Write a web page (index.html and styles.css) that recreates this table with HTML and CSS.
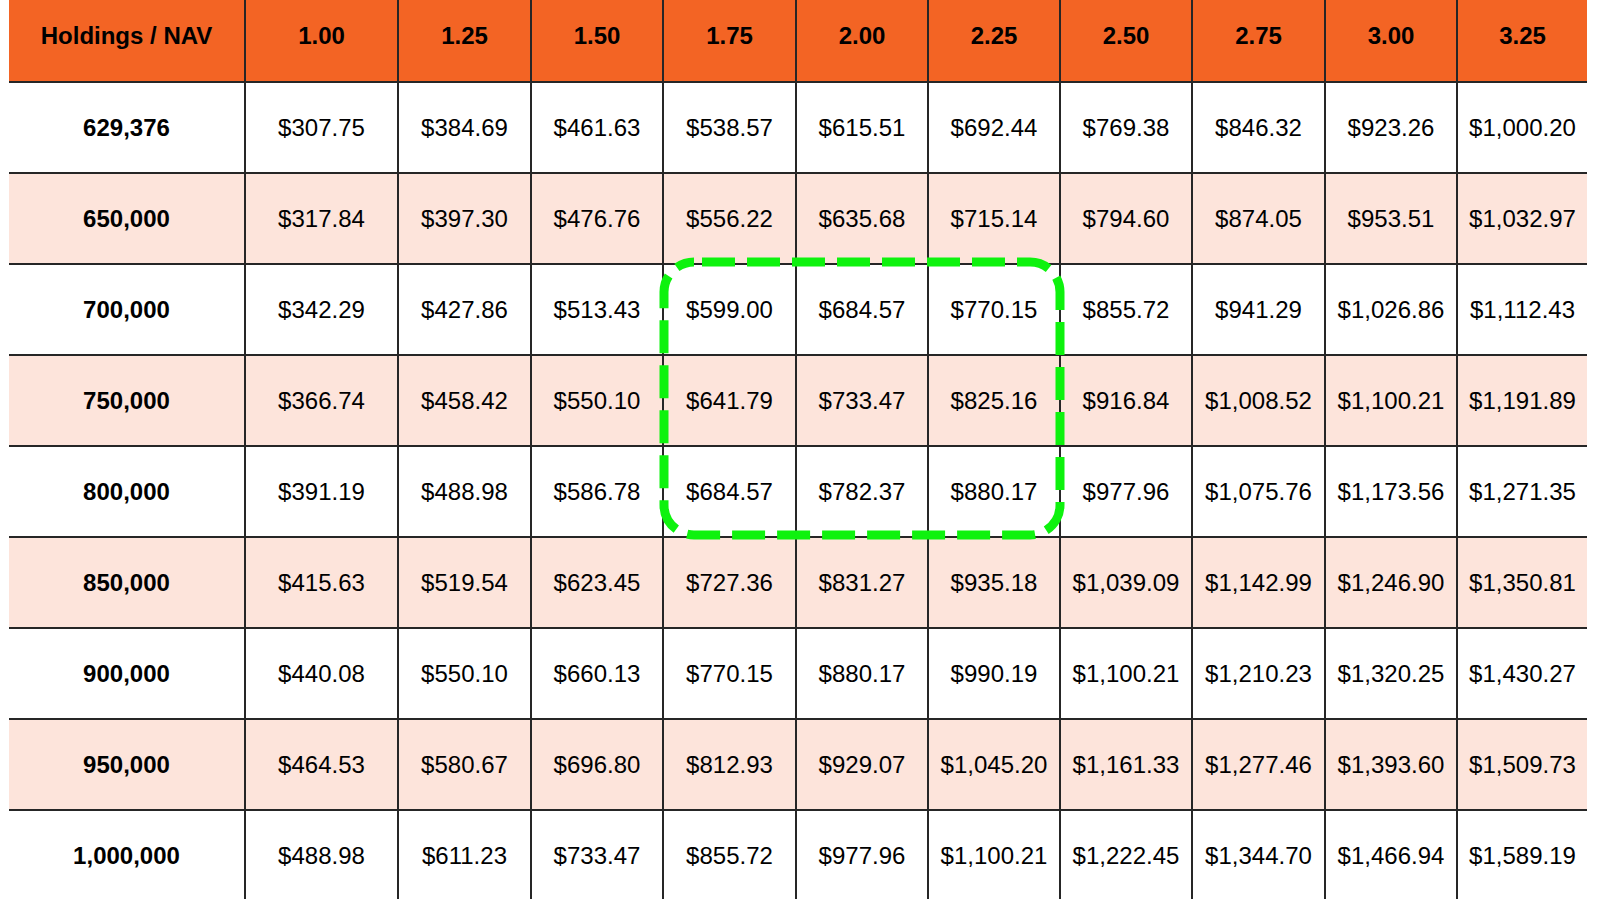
FILE: index.html
```html
<!DOCTYPE html>
<html>
<head>
<meta charset="utf-8">
<link rel="stylesheet" href="styles.css">
</head>
<body>
<div class="sheet">
<table class="grid">
<colgroup>
<col class="c-first"><col class="c-wide"><col class="c-a"><col class="c-b"><col class="c-a"><col class="c-b"><col class="c-b"><col class="c-b"><col class="c-a"><col class="c-b"><col class="c-last">
</colgroup>
<thead>
<tr><th>Holdings / NAV</th><th>1.00</th><th>1.25</th><th>1.50</th><th>1.75</th><th>2.00</th><th>2.25</th><th>2.50</th><th>2.75</th><th>3.00</th><th>3.25</th></tr>
</thead>
<tbody>
<tr><td class="rh">629,376</td><td>$307.75</td><td>$384.69</td><td>$461.63</td><td>$538.57</td><td>$615.51</td><td>$692.44</td><td>$769.38</td><td>$846.32</td><td>$923.26</td><td>$1,000.20</td></tr>
<tr class="alt"><td class="rh">650,000</td><td>$317.84</td><td>$397.30</td><td>$476.76</td><td>$556.22</td><td>$635.68</td><td>$715.14</td><td>$794.60</td><td>$874.05</td><td>$953.51</td><td>$1,032.97</td></tr>
<tr><td class="rh">700,000</td><td>$342.29</td><td>$427.86</td><td>$513.43</td><td>$599.00</td><td>$684.57</td><td>$770.15</td><td>$855.72</td><td>$941.29</td><td>$1,026.86</td><td>$1,112.43</td></tr>
<tr class="alt"><td class="rh">750,000</td><td>$366.74</td><td>$458.42</td><td>$550.10</td><td>$641.79</td><td>$733.47</td><td>$825.16</td><td>$916.84</td><td>$1,008.52</td><td>$1,100.21</td><td>$1,191.89</td></tr>
<tr><td class="rh">800,000</td><td>$391.19</td><td>$488.98</td><td>$586.78</td><td>$684.57</td><td>$782.37</td><td>$880.17</td><td>$977.96</td><td>$1,075.76</td><td>$1,173.56</td><td>$1,271.35</td></tr>
<tr class="alt"><td class="rh">850,000</td><td>$415.63</td><td>$519.54</td><td>$623.45</td><td>$727.36</td><td>$831.27</td><td>$935.18</td><td>$1,039.09</td><td>$1,142.99</td><td>$1,246.90</td><td>$1,350.81</td></tr>
<tr><td class="rh">900,000</td><td>$440.08</td><td>$550.10</td><td>$660.13</td><td>$770.15</td><td>$880.17</td><td>$990.19</td><td>$1,100.21</td><td>$1,210.23</td><td>$1,320.25</td><td>$1,430.27</td></tr>
<tr class="alt"><td class="rh">950,000</td><td>$464.53</td><td>$580.67</td><td>$696.80</td><td>$812.93</td><td>$929.07</td><td>$1,045.20</td><td>$1,161.33</td><td>$1,277.46</td><td>$1,393.60</td><td>$1,509.73</td></tr>
<tr><td class="rh">1,000,000</td><td>$488.98</td><td>$611.23</td><td>$733.47</td><td>$855.72</td><td>$977.96</td><td>$1,100.21</td><td>$1,222.45</td><td>$1,344.70</td><td>$1,466.94</td><td>$1,589.19</td></tr>
</tbody>
</table>
<svg class="highlight" width="420" height="300" viewBox="0 0 420 300">
<rect x="5" y="5" width="396" height="273" rx="30" ry="30" fill="none" stroke="#0ef20e" stroke-width="9" stroke-dasharray="33 12" stroke-dashoffset="-8"/>
</svg>
</div>
</body>
</html>
```

FILE: styles.css
```css
html, body {
  margin: 0;
  padding: 0;
  background: #ffffff;
}
body {
  font-family: "Liberation Sans", Arial, sans-serif;
  color: #000;
  overflow: hidden;
}
.sheet {
  position: relative;
  margin-left: 9px;
  width: 1578px;
}
.grid {
  border-collapse: collapse;
  table-layout: fixed;
  width: 1578px;
  font-size: 24px;
}
.c-first { width: 236px; }
.c-wide { width: 153px; }
.c-a { width: 133px; }
.c-b { width: 132px; }
.c-last { width: 130px; }
.grid th, .grid td {
  padding: 0;
  text-align: center;
  border-left: 2px solid #262626;
  border-bottom: 2px solid #262626;
  white-space: nowrap;
}
.grid th:first-child, .grid td:first-child {
  border-left: none;
}
.grid th {
  background: #f36424;
  font-weight: bold;
  height: 82px;
  padding-bottom: 9px;
  box-sizing: border-box;
}
.grid td {
  height: 89px;
}
.grid tr.alt td {
  background: #fde4db;
}
.grid td.rh {
  font-weight: bold;
}
.highlight {
  position: absolute;
  left: 650px;
  top: 257px;
}
```
